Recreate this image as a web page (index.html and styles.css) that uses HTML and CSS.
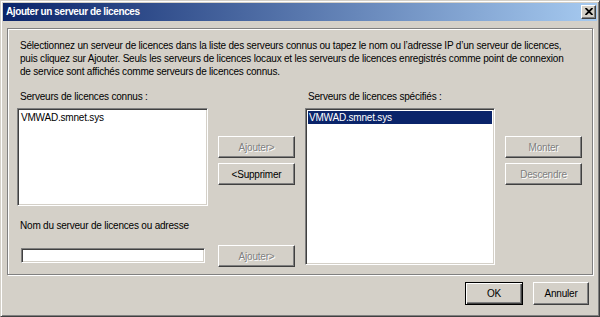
FILE: index.html
```html
<!DOCTYPE html>
<html lang="fr">
  <head>
    <meta charset="UTF-8" />
    <title>Ajouter un serveur de licences</title>
    <link rel="stylesheet" href="styles.css">
  </head>
  <body>
    <div class="window">
      <header class="titlebar">
        <div class="title">Ajouter un serveur de licences</div>
        <button class="close">
          <svg width="8" height="7" viewBox="0 0 8 7">
            <path d="M0.5 0 L7.5 7 M7.5 0 L0.5 7" stroke="#000" stroke-width="1.8" />
          </svg>
        </button>
      </header>
      <main class="dialog">
        <div class="group">
          <p class="intro">
            Sélectionnez un serveur de licences dans la liste des serveurs connus ou tapez le nom ou l’adresse IP d’un serveur de licences,<br />
            puis cliquez sur Ajouter. Seuls les serveurs de licences locaux et les serveurs de licences enregistrés comme point de connexion<br />
            de service sont affichés comme serveurs de licences connus.
          </p>
          <div class="columns">
            <div class="col col-known">
              <div class="label">Serveurs de licences connus :</div>
              <ul class="list list-known">
                <li>VMWAD.smnet.sys</li>
              </ul>
              <div class="label label-name">Nom du serveur de licences ou adresse</div>
              <input type="text" class="edit" />
            </div>
            <div class="col col-buttons">
              <button class="btn" disabled>Ajouter&gt;</button>
              <button class="btn">&lt;Supprimer</button>
              <button class="btn btn-add-name" disabled>Ajouter&gt;</button>
            </div>
            <div class="col col-selected">
              <div class="label">Serveurs de licences spécifiés :</div>
              <ul class="list list-selected">
                <li class="selected">VMWAD.smnet.sys</li>
              </ul>
            </div>
            <div class="col col-buttons">
              <button class="btn" disabled>Monter</button>
              <button class="btn" disabled>Descendre</button>
            </div>
          </div>
        </div>
        <footer class="actions">
          <button class="btn btn-default">OK</button>
          <button class="btn btn-cancel">Annuler</button>
        </footer>
      </main>
    </div>
  </body>
</html>
```

FILE: styles.css
```css
* {
  box-sizing: border-box;
}

body {
  margin: 0;
  font-family: "Liberation Sans", Arial, sans-serif;
  font-size: 10px;
  letter-spacing: -0.2px;
  color: #000;
  background: #d4d0c8;
}

.window {
  width: 600px;
  height: 317px;
  background: #d4d0c8;
  border: 1px solid;
  border-color: #d4d0c8 #404040 #404040 #d4d0c8;
  box-shadow: inset 1px 1px #fff, inset -1px -1px #808080;
  padding: 2px;
  display: flex;
  flex-direction: column;
}

/* title bar */
.titlebar {
  height: 18px;
  display: flex;
  align-items: center;
  justify-content: space-between;
  background: linear-gradient(to right, #0a246a, #a6caf0);
  padding: 0 1px 1px 3px;
}

.title {
  color: #fff;
  font-weight: bold;
  font-size: 10px;
  letter-spacing: -0.4px;
}

.close {
  width: 15px;
  height: 14px;
  padding: 0;
  display: flex;
  align-items: center;
  justify-content: center;
  background: #d4d0c8;
  border: 1px solid;
  border-color: #fff #404040 #404040 #fff;
  box-shadow: inset -1px -1px #808080;
}

.dialog {
  flex: 1;
  padding: 7px 4px 0 4px;
}

/* etched group box */
.group {
  width: 586px;
  height: 247px;
  border: 1px solid #808080;
  box-shadow: inset 1px 1px #fff, 1px 1px #fff;
}

.intro {
  margin: 0;
  padding: 10px 0 0 12px;
  line-height: 13px;
  white-space: nowrap;
}

.columns {
  display: flex;
  gap: 10px;
  margin-top: 12px;
  padding-left: 9px;
}

.col {
  display: flex;
  flex-direction: column;
}

.col-known {
  width: 191px;
}

.col-selected {
  width: 190px;
}

.col-buttons {
  width: 77px;
  padding-top: 46px;
  gap: 5px;
}

.label {
  line-height: 13px;
  padding-left: 3px;
  white-space: nowrap;
}

.label-name {
  margin-top: 13px;
}

/* list boxes */
.list {
  list-style: none;
  margin: 5px 0 0 0;
  padding: 2px;
  background: #fff;
  border: 1px solid;
  border-color: #808080 #fff #fff #808080;
  box-shadow: inset 1px 1px #404040, inset -1px -1px #d4d0c8;
}

.list li {
  line-height: 13px;
  padding: 0 1px;
}

.list-known {
  height: 98px;
}

.list-selected {
  height: 157px;
}

.list li.selected {
  background: #0a246a;
  color: #fff;
}

.edit {
  margin: 16px 0 0 4px;
  width: 184px;
  height: 15px;
  padding: 0;
  background: #fff;
  border: 1px solid;
  border-color: #808080 #fff #fff #808080;
  box-shadow: inset 1px 1px #404040, inset -1px -1px #d4d0c8;
}

/* push buttons */
.btn {
  height: 22px;
  padding: 0;
  font-family: inherit;
  font-size: 10px;
  letter-spacing: -0.2px;
  color: #000;
  background: #d4d0c8;
  border: 1px solid;
  border-color: #fff #404040 #404040 #fff;
  box-shadow: inset -1px -1px #808080;
}

.btn:disabled {
  color: #808080;
  text-shadow: 1px 1px #fff;
}

.btn-add-name {
  margin-top: 55px;
}

.actions {
  display: flex;
  justify-content: flex-end;
  gap: 10px;
  padding: 7px 4px 0 0;
}

.btn-default {
  width: 58px;
  height: 23px;
  border: 1px solid #000;
  box-shadow: inset 1px 1px #fff, inset -1px -1px #404040, inset -2px -2px #808080;
}

.btn-cancel {
  width: 56px;
  height: 23px;
}
```
